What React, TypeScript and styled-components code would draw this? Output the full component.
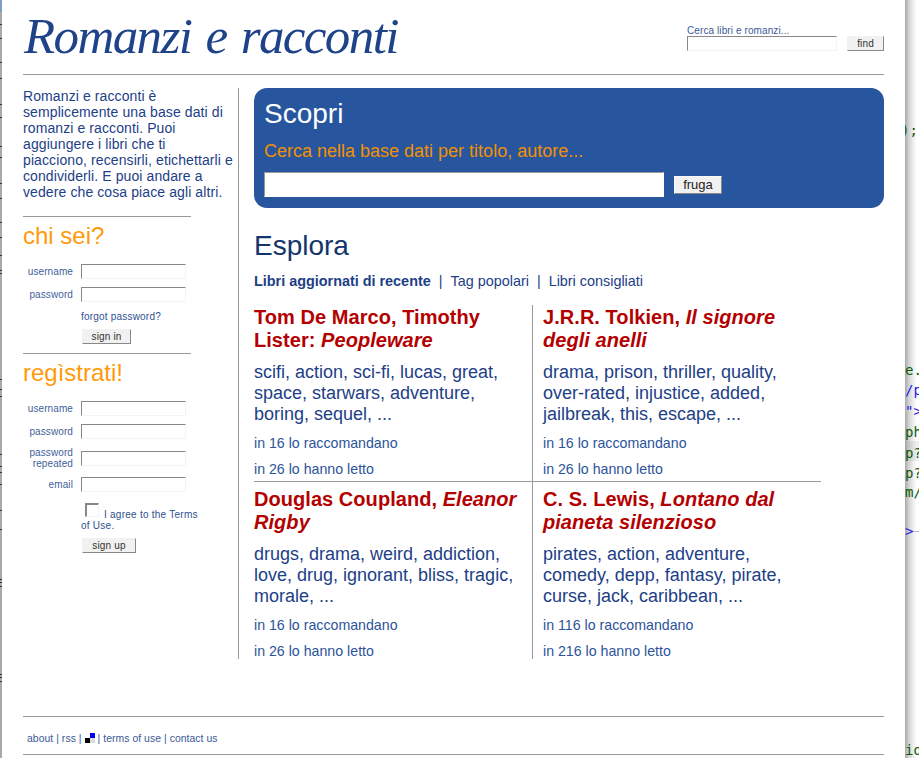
import React from "react";
import styled, { createGlobalStyle } from "styled-components";

const Global = createGlobalStyle`
  html, body { margin: 0; padding: 0; background: #fff; }
  body { font-family: "Liberation Sans", Arial, sans-serif; color: #1d4087; }
`;

const Frame = styled.div`
  display: flex;
  width: 919px;
  height: 758px;
  overflow: hidden;
`;
const LeftEdge = styled.svg`
  flex: 0 0 2px;
  width: 2px;
  height: 758px;
  background: #a9a9a9;
`;
const Page = styled.div`
  flex: 0 0 861px;
  width: 861px;
  padding: 0 21px;
  display: flex;
  flex-direction: column;
`;
const Desk = styled.div`
  position: relative;
  flex: 1;
  overflow: hidden;
  background: linear-gradient(to right, #a8a8a8 0, #d4d4d4 4px, #f2f2f2 9px, #fff 12px);
`;
const CodeBand = styled.div`
  position: absolute;
  left: 0;
  right: 0;
  top: 441px;
  height: 20px;
  background: rgba(120, 120, 120, 0.12);
`;
const CodeLine = styled.div`
  position: absolute;
  left: 6px;
  right: 0;
  top: 531px;
  height: 1px;
  background: #bbb;
`;
const CodeBit = styled.span<{ $y: number; $c: string; $x?: number }>`
  position: absolute;
  left: ${(p) => p.$x ?? 0}px;
  top: ${(p) => p.$y}px;
  font: 14px/16px "DejaVu Sans Mono", monospace;
  color: ${(p) => p.$c};
  white-space: pre;
`;
const Header = styled.header`
  height: 74px;
  border-bottom: 1px solid #999;
  display: flex;
  justify-content: space-between;
`;
const Title = styled.h1`
  margin: 8px 0 0 1px;
  font: italic 400 51px/56px "Liberation Serif", "Times New Roman", serif;
  letter-spacing: -1.6px;
  word-spacing: 3px;
  color: #1f4389;
`;
const SearchBox = styled.form`
  margin: 25px 0 0;
  width: 197px;
`;
const SearchLabel = styled.label`
  display: block;
  font-size: 10px;
  letter-spacing: 0.1px;
  line-height: 11px;
  color: #3a5a97;
`;
const SearchRow = styled.div`
  display: flex;
  justify-content: space-between;
`;
const Field = styled.input<{ $w: number }>`
  box-sizing: border-box;
  width: ${(p) => p.$w}px;
  height: 15px;
  padding: 0;
  background: #fff;
  border-style: solid;
  border-width: 1px;
  border-color: #888 #f4f4f4 #f4f4f4 #888;
  outline: none;
  align-self: center;
`;
const Btn = styled.button<{ $w: number }>`
  box-sizing: border-box;
  width: ${(p) => p.$w}px;
  height: 15px;
  padding: 0;
  background: #f1f1f1;
  border-style: solid;
  border-width: 1px;
  border-color: #f1f1f1 #888 #888 #f1f1f1;
  font: 10px/12px "Liberation Sans", Arial, sans-serif;
  letter-spacing: 0.15px;
  color: #333;
`;
const Body = styled.div`
  display: flex;
  margin-top: 13px;
`;
const Side = styled.aside`
  width: 215px;
  height: 571px;
  border-right: 1px solid #999;
`;
const Intro = styled.p`
  margin: 0;
  font-size: 14px;
  letter-spacing: 0.1px;
  line-height: 16px;
  color: #1d4087;
  height: 128px;
  white-space: nowrap;
`;
const Rule = styled.hr<{ $t: number }>`
  width: 168px;
  margin: ${(p) => p.$t}px 0 0;
  border: 0;
  border-top: 1px solid #999;
  height: 0;
`;
const SideHead = styled.h3`
  margin: 4px 0 0;
  font: 400 24px/29px "Liberation Sans", Arial, sans-serif;
  color: #ff9a0a;
`;
const FormGrid = styled.div<{ $t: number }>`
  display: grid;
  grid-template-columns: 50px 105px;
  column-gap: 8px;
  row-gap: 8px;
  margin: ${(p) => p.$t}px 0 0 0;
`;
const FieldLabel = styled.label`
  font-size: 10px;
  letter-spacing: 0.1px;
  line-height: 11px;
  color: #3f5f9b;
  text-align: right;
  align-self: center;
`;
const SmallLink = styled.a`
  display: block;
  margin: 9px 0 0 58px;
  font-size: 10px;
  letter-spacing: 0.2px;
  line-height: 11px;
  color: #2e5090;
`;
const SideBtn = styled(Btn)`
  display: block;
  margin: 7px 0 0 59px;
`;
const AgreeRow = styled.div`
  width: 122px;
  margin: 11px 0 0 58px;
  font-size: 10px;
  letter-spacing: 0.25px;
  line-height: 11px;
  color: #2e5090;
`;
const Check = styled.span`
  display: inline-block;
  box-sizing: border-box;
  width: 14px;
  height: 14px;
  margin: 0 5px 0 4px;
  border-style: solid;
  border-width: 2px 1px 1px 2px;
  border-color: #888 #f4f4f4 #f4f4f4 #888;
  vertical-align: 1px;
`;
const Main = styled.main`
  flex: 1;
  margin-left: 15px;
  min-width: 0;
`;
const Hero = styled.section`
  height: 120px;
  box-sizing: border-box;
  padding: 10px;
  border-radius: 13px;
  background: #27569f;
`;
const HeroTitle = styled.h2`
  margin: 0;
  font: 400 28px/32px "Liberation Sans", Arial, sans-serif;
  color: #fff;
`;
const HeroSub = styled.p`
  margin: 11px 0 0;
  font-size: 18px;
  line-height: 21px;
  color: #f29000;
`;
const HeroRow = styled.div`
  display: flex;
  align-items: center;
  gap: 10px;
  margin-top: 10px;
`;
const HeroInput = styled.input`
  box-sizing: border-box;
  width: 400px;
  height: 25px;
  padding: 0;
  border-style: solid;
  border-width: 1px;
  border-color: #999 #fff #fff #999;
  background: #fff;
  outline: none;
`;
const HeroBtn = styled.button`
  box-sizing: border-box;
  width: 48px;
  height: 18px;
  padding: 0;
  background: #f1f1f1;
  border-style: solid;
  border-width: 1px;
  border-color: #f8f8f8 #888 #888 #f8f8f8;
  font: 13px/14px "Liberation Sans", Arial, sans-serif;
  color: #222;
`;
const Section = styled.h2`
  margin: 22px 0 0;
  font: 400 28px/32px "Liberation Sans", Arial, sans-serif;
  color: #14346c;
`;
const Tabs = styled.nav`
  display: flex;
  gap: 8px;
  margin-top: 11px;
  font-size: 14.4px;
  line-height: 16px;
  color: #1d4087;
`;
const Tab = styled.a<{ $on?: boolean }>`
  font-weight: ${(p) => (p.$on ? 700 : 400)};
`;
const Books = styled.div`
  display: grid;
  grid-template-columns: 278px 289px;
  width: 567px;
  margin-top: 16px;
`;
const Book = styled.article<{ $col: number; $row: number }>`
  box-sizing: border-box;
  height: 177px;
  padding-top: ${(p) => (p.$row === 0 ? 1 : 6)}px;
  padding-left: ${(p) => (p.$col === 0 ? 0 : 10)}px;
  border-left: ${(p) => (p.$col === 0 ? "0" : "1px solid #999")};
  border-bottom: ${(p) => (p.$row === 0 ? "1px solid #999" : "0")};
`;
const BookTitle = styled.h4`
  margin: 0;
  width: 265px;
  font: 700 20px/23px "Liberation Sans", Arial, sans-serif;
  letter-spacing: 0.05px;
  color: #b40000;
`;
const Tags = styled.p`
  margin: 10px 0 0;
  width: 270px;
  font-size: 18px;
  line-height: 21px;
  color: #1d4087;
`;
const Meta = styled.p<{ $t: number }>`
  margin: ${(p) => p.$t}px 0 0;
  font-size: 14.2px;
  line-height: 16px;
  color: #2c5499;
`;
const Footer = styled.footer`
  margin-top: 57px;
  height: 37px;
  box-sizing: content-box;
  border-top: 1px solid #999;
  border-bottom: 1px solid #999;
  display: flex;
  align-items: center;
  padding: 0 0 0 4px;
  font-size: 10.4px;
  letter-spacing: 0.05px;
  color: #3a5a97;
  gap: 3px;
`;
const FootText = styled.span`
  padding-top: 5px;
`;
const BadgeIcon = styled.svg`
  margin-top: 5px;
`;

const Badge = () => (
  <BadgeIcon width="10" height="10" viewBox="0 0 10 10">
    <rect x="5" y="0" width="5" height="5" fill="#0000ff" />
    <rect x="0" y="5" width="5" height="5" fill="#000" />
    <rect x="5" y="5" width="5" height="5" fill="#ddd" />
  </BadgeIcon>
);

const marks = [24, 38, 62, 78, 104, 117, 146, 157, 183, 198, 222, 237, 255, 270, 273, 379, 389, 396, 454, 466, 472, 484, 510, 529, 579, 582, 586, 674, 677, 681];

const code: [number, string, string, number?][] = [
  [122, ");", "#0a5a0a", -4],
  [362, "e.", "#0a5a0a"],
  [382, "/p", "#2020e0"],
  [403, '">', "#2020e0"],
  [424, "ph", "#0a5a0a"],
  [445, "p?", "#0a5a0a"],
  [465, "p?", "#0a5a0a"],
  [484, "m/", "#0a5a0a"],
  [523, ">", "#2020e0"],
  [742, "id", "#0a5a0a"],
];

const books = [
  { a: "Tom De Marco, Timothy Lister: ", t: "Peopleware", tags: "scifi, action, sci-fi, lucas, great, space, starwars, adventure, boring, sequel, ...", r: 16, l: 26 },
  { a: "J.R.R. Tolkien, ", t: "Il signore degli anelli", tags: "drama, prison, thriller, quality, over-rated, injustice, added, jailbreak, this, escape, ...", r: 16, l: 26 },
  { a: "Douglas Coupland, ", t: "Eleanor Rigby", tags: "drugs, drama, weird, addiction, love, drug, ignorant, bliss, tragic, morale, ...", r: 16, l: 26 },
  { a: "C. S. Lewis, ", t: "Lontano dal pianeta silenzioso", tags: "pirates, action, adventure, comedy, depp, fantasy, pirate, curse, jack, caribbean, ...", r: 116, l: 216 },
];

export default function App() {
  return (
    <Frame>
      <Global />
      <LeftEdge viewBox="0 0 2 758">
        <rect x="0" y="0" width="2" height="12" fill="#7f9bc6" />
        {marks.map((y) => (
          <rect key={y} x="0" y={y} width="2" height="1" fill="#333" />
        ))}
      </LeftEdge>
      <Page>
        <Header>
          <Title>Romanzi e racconti</Title>
          <SearchBox>
            <SearchLabel>Cerca libri e romanzi...</SearchLabel>
            <SearchRow>
              <Field $w={150} />
              <Btn $w={37} type="button">find</Btn>
            </SearchRow>
          </SearchBox>
        </Header>
        <Body>
          <Side>
            <Intro>
              Romanzi e racconti è<br />
              semplicemente una base dati di<br />
              romanzi e racconti. Puoi<br />
              aggiungere i libri che ti<br />
              piacciono, recensirli, etichettarli e<br />
              condividerli. E puoi andare a<br />
              vedere che cosa piace agli altri.
            </Intro>
            <Rule $t={0} />
            <SideHead>chi sei?</SideHead>
            <FormGrid $t={14}>
              <FieldLabel>username</FieldLabel>
              <Field $w={105} />
              <FieldLabel>password</FieldLabel>
              <Field $w={105} />
            </FormGrid>
            <SmallLink>forgot password?</SmallLink>
            <SideBtn $w={49} type="button">sign in</SideBtn>
            <Rule $t={9} />
            <SideHead>regìstrati!</SideHead>
            <FormGrid $t={14}>
              <FieldLabel>username</FieldLabel>
              <Field $w={105} />
              <FieldLabel>password</FieldLabel>
              <Field $w={105} />
              <FieldLabel>password repeated</FieldLabel>
              <Field $w={105} />
              <FieldLabel>email</FieldLabel>
              <Field $w={105} />
            </FormGrid>
            <AgreeRow>
              <Check />I agree to the Terms of Use.
            </AgreeRow>
            <SideBtn $w={54} type="button">sign up</SideBtn>
          </Side>
          <Main>
            <Hero>
              <HeroTitle>Scopri</HeroTitle>
              <HeroSub>Cerca nella base dati per titolo, autore...</HeroSub>
              <HeroRow>
                <HeroInput />
                <HeroBtn type="button">fruga</HeroBtn>
              </HeroRow>
            </Hero>
            <Section>Esplora</Section>
            <Tabs>
              <Tab $on>Libri aggiornati di recente</Tab>
              <span>|</span>
              <Tab>Tag popolari</Tab>
              <span>|</span>
              <Tab>Libri consigliati</Tab>
            </Tabs>
            <Books>
              {books.map((b, i) => (
                <Book key={b.t} $col={i % 2} $row={i < 2 ? 0 : 1}>
                  <BookTitle>
                    {b.a}
                    <em>{b.t}</em>
                  </BookTitle>
                  <Tags>{b.tags}</Tags>
                  <Meta $t={10}>in {b.r} lo raccomandano</Meta>
                  <Meta $t={10}>in {b.l} lo hanno letto</Meta>
                </Book>
              ))}
            </Books>
          </Main>
        </Body>
        <Footer>
          <FootText>about | rss |</FootText>
          <Badge />
          <FootText>| terms of use | contact us</FootText>
        </Footer>
      </Page>
      <Desk>
        <CodeBand />
        <CodeLine />
        {code.map(([y, s, c, x]) => (
          <CodeBit key={y} $y={y} $c={c} $x={x}>{s}</CodeBit>
        ))}
      </Desk>
    </Frame>
  );
}
